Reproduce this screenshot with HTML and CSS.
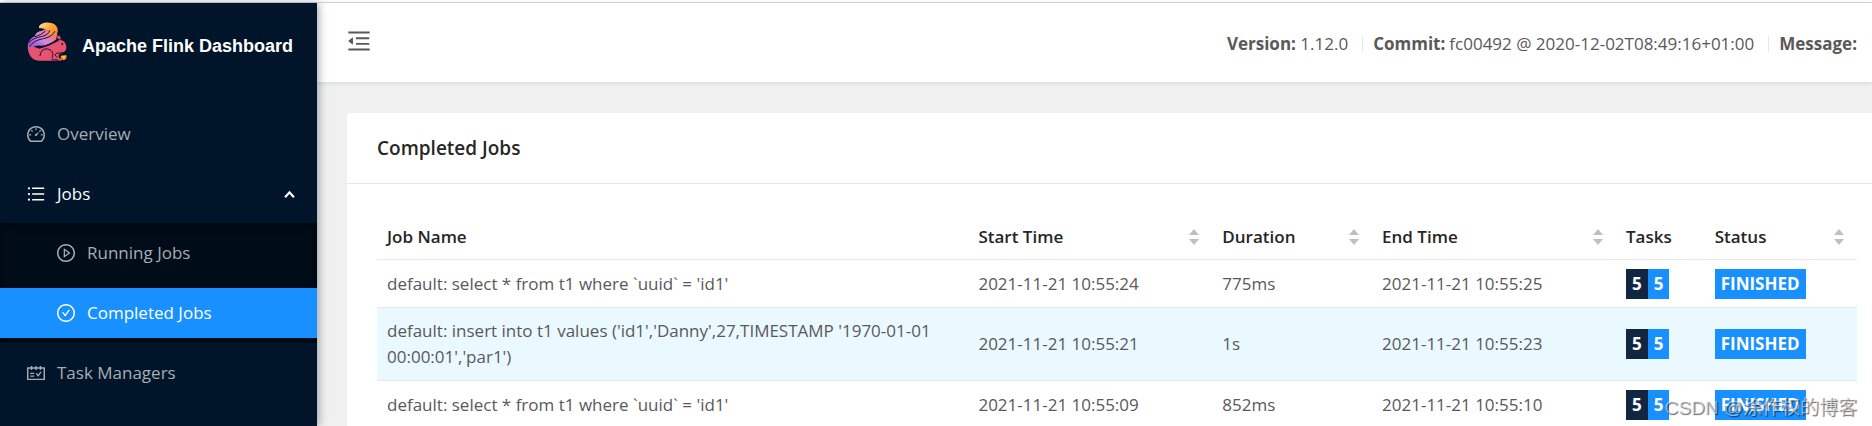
FILE: index.html
```html
<!DOCTYPE html>
<html lang="en">
<head>
  <meta charset="UTF-8" />
  <meta name="viewport" content="width=device-width, initial-scale=1.0"/>
  <title>Apache Flink Dashboard</title>
  <link rel="stylesheet" href="styles.css">
</head>
<body>
  <div class="layout">
    <aside class="sidebar">
      <div class="logo">
        <svg class="logo-img" viewBox="33 33 120 120" aria-hidden="true">
          <defs>
            <linearGradient id="tail" x1="0" y1="1" x2="1" y2="0">
              <stop offset="0" stop-color="#e6526f"/>
              <stop offset="0.25" stop-color="#a45be0"/>
              <stop offset="0.5" stop-color="#cf8be0"/>
              <stop offset="0.75" stop-color="#f0788a"/>
            </linearGradient>
            <linearGradient id="tip" x1="0" y1="0" x2="1" y2="1">
              <stop offset="0" stop-color="#fde3a0"/>
              <stop offset="0.5" stop-color="#f9a62c"/>
              <stop offset="1" stop-color="#f3705a"/>
            </linearGradient>
          </defs>
          <path fill="#e6526f" d="M36 108C35 135 48 151 68 152H133L140 149L129 143C126 137 130 131 137 130C145 127 152 120 151 110C150 99 145 93 135 90L131 84L127 93L96 108L70 116L48 108Z"/>
          <path fill="url(#tail)" d="M37 124C31 100 42 86 56 79C59 68 68 63 79 62L92 54L112 60C126 66 126 78 122 86C115 98 97 99 87 109C74 106 56 104 46 116C42 120 40 124 37 124Z"/>
          <path fill="url(#tip)" d="M69 49C76 39 87 36 99 38C117 39 128 50 125 66L119 78L108 86L110 76L99 78C105 68 99 60 88 57C80 56 75 53 69 54Z"/>
          <g fill="none" stroke="#1a1028" stroke-width="3" stroke-linecap="round">
            <path d="M41 110C52 91 70 89 90 84C104 80 112 73 116 65"/>
            <path d="M39 98C49 86 62 83 79 79C91 76 99 70 101 62"/>
            <path d="M57 80C68 77 79 72 87 64"/>
            <path d="M81 108C91 107 105 102 120 91"/>
            <path d="M72 137C74 120 86 114 98 118C112 122 113 136 108 144"/>
            <path d="M123 141C112 136 119 127 132 129L147 128M108 150C115 148 122 149 127 151"/>
          </g>
          <path fill="#e6526f" stroke="#1a1028" stroke-width="2" d="M121 85L125 75L134 79L135 90Z"/>
          <circle cx="139" cy="102" r="3" fill="#1a1028"/>
          <path fill="#f79a1c" d="M134 137L150 135C155 141 149 150 142 151L134 145Z"/>
          <path fill="#fde3a0" d="M140 139L147 138L143 143Z"/>
        </svg>
        <h1>Apache Flink Dashboard</h1>
      </div>

      <nav class="menu">
        <a class="menu-item" href="#overview">
          <svg class="icon" viewBox="64 64 896 896"><path d="M924.8 385.6a446.7 446.7 0 0 0-96-142.4 446.7 446.7 0 0 0-142.4-96C631.1 123.8 572.5 112 512 112s-119.1 11.8-174.4 35.2a446.7 446.7 0 0 0-142.4 96 446.7 446.7 0 0 0-96 142.4C75.8 440.9 64 499.5 64 560c0 132.7 58.3 257.7 159.9 343.1l1.7 1.4c5.8 4.8 13.1 7.5 20.6 7.5h531.7c7.5 0 14.8-2.7 20.6-7.5l1.7-1.4C901.7 817.7 960 692.7 960 560c0-60.5-11.9-119.1-35.2-174.4zM761.4 836H262.6A371.12 371.12 0 0 1 140 560c0-99.4 38.7-192.8 109-263 70.3-70.3 163.7-109 263-109 99.4 0 192.8 38.7 263 109 70.3 70.3 109 163.7 109 263 0 105.6-44.5 205.5-122.6 276zM623.5 421.5a8.03 8.03 0 0 0-11.3 0L527.7 506c-18.7-5-39.4-.2-54.1 14.5a55.95 55.95 0 0 0 0 79.2 55.95 55.95 0 0 0 79.2 0 55.87 55.87 0 0 0 14.5-54.1l84.5-84.5c3.1-3.1 3.1-8.2 0-11.3l-28.3-28.3zM490 320h44c4.4 0 8-3.6 8-8v-80c0-4.4-3.6-8-8-8h-44c-4.4 0-8 3.6-8 8v80c0 4.4 3.6 8 8 8zm260 218v44c0 4.4 3.6 8 8 8h80c4.4 0 8-3.6 8-8v-44c0-4.4-3.6-8-8-8h-80c-4.4 0-8 3.6-8 8zm12.7-197.2l-31.1-31.1a8.03 8.03 0 0 0-11.3 0l-56.6 56.6a8.03 8.03 0 0 0 0 11.3l31.1 31.1c3.1 3.1 8.2 3.1 11.3 0l56.6-56.6c3.1-3.1 3.1-8.2 0-11.3zm-458.6-31.1a8.03 8.03 0 0 0-11.3 0l-31.1 31.1a8.03 8.03 0 0 0 0 11.3l56.6 56.6c3.1 3.1 8.2 3.1 11.3 0l31.1-31.1c3.1-3.1 3.1-8.2 0-11.3l-56.6-56.6zM262 530h-80c-4.4 0-8 3.6-8 8v44c0 4.4 3.6 8 8 8h80c4.4 0 8-3.6 8-8v-44c0-4.4-3.6-8-8-8z"/></svg>
          <span>Overview</span>
        </a>
        <button class="menu-item open" type="button" aria-expanded="true">
          <svg class="icon" viewBox="64 64 896 896"><path d="M320 192h600v72H320zM320 476h600v72H320zM320 760h600v72H320zM104 228a56 56 0 1 0 112 0 56 56 0 1 0-112 0zM104 512a56 56 0 1 0 112 0 56 56 0 1 0-112 0zM104 796a56 56 0 1 0 112 0 56 56 0 1 0-112 0z"/></svg>
          <span>Jobs</span>
          <svg class="arrow" viewBox="0 0 10 8"><path d="M1 6.5L5 2L9 6.5"/></svg>
        </button>
        <div class="submenu">
          <a class="menu-item" href="#running">
            <svg class="icon" viewBox="64 64 896 896"><path d="M512 64C264.6 64 64 264.6 64 512s200.6 448 448 448 448-200.6 448-448S759.4 64 512 64zm0 820c-205.4 0-372-166.6-372-372s166.6-372 372-372 372 166.6 372 372-166.6 372-372 372z"/><path d="M719.4 499.1l-296.1-215A15.9 15.9 0 0 0 398 297v430c0 13.1 14.8 20.5 25.3 12.9l296.1-215a15.9 15.9 0 0 0 0-25.8zm-257.6 134V390.9L628.5 512 461.8 633.1z"/></svg>
            <span>Running Jobs</span>
          </a>
          <a class="menu-item active" href="#completed">
            <svg class="icon" viewBox="64 64 896 896"><path d="M699 353h-46.9c-10.2 0-19.9 4.9-25.9 13.3L469 584.3l-71.2-98.8c-6-8.3-15.6-13.3-25.9-13.3H325c-6.5 0-10.3 7.4-6.5 12.7l124.6 172.8a31.8 31.8 0 0 0 51.7 0l210.6-292c3.9-5.3.1-12.7-6.4-12.7z"/><path d="M512 64C264.6 64 64 264.6 64 512s200.6 448 448 448 448-200.6 448-448S759.4 64 512 64zm0 820c-205.4 0-372-166.6-372-372s166.6-372 372-372 372 166.6 372 372-166.6 372-372 372z"/></svg>
            <span>Completed Jobs</span>
          </a>
        </div>
        <a class="menu-item" href="#task-managers">
          <svg class="icon" viewBox="64 64 896 896"><path d="M928 224H768v-56c0-4.4-3.6-8-8-8h-56c-4.4 0-8 3.6-8 8v56H548v-56c0-4.4-3.6-8-8-8h-56c-4.4 0-8 3.6-8 8v56H328v-56c0-4.4-3.6-8-8-8h-56c-4.4 0-8 3.6-8 8v56H96c-17.7 0-32 14.3-32 32v576c0 17.7 14.3 32 32 32h832c17.7 0 32-14.3 32-32V256c0-17.7-14.3-32-32-32zm-40 568H136V296h120v56c0 4.4 3.6 8 8 8h56c4.4 0 8-3.6 8-8v-56h148v56c0 4.4 3.6 8 8 8h56c4.4 0 8-3.6 8-8v-56h148v56c0 4.4 3.6 8 8 8h56c4.4 0 8-3.6 8-8v-56h120v496zM416 496H232c-4.4 0-8 3.6-8 8v48c0 4.4 3.6 8 8 8h184c4.4 0 8-3.6 8-8v-48c0-4.4-3.6-8-8-8zm0 136H232c-4.4 0-8 3.6-8 8v48c0 4.4 3.6 8 8 8h184c4.4 0 8-3.6 8-8v-48c0-4.4-3.6-8-8-8zm308.2-177.4L620.6 598.3l-52.8-73.1c-3-4.2-7.8-6.6-12.9-6.6H500c-6.5 0-10.3 7.4-6.5 12.7l114.1 158.2a15.9 15.9 0 0 0 25.8 0l165-228.7c3.8-5.3 0-12.7-6.5-12.7H737c-5-.1-9.8 2.4-12.8 6.5z"/></svg>
          <span>Task Managers</span>
        </a>
      </nav>
    </aside>

    <div class="main">
      <header class="header">
        <button class="fold-btn" type="button" aria-label="Collapse menu">
          <svg viewBox="64 64 896 896"><path d="M400 370h496v72H400zM400 582h496v72H400zM112 160h800v72H112zM112 792h800v72H112zM115.4 518.9L271.7 642c5.8 4.6 14.4.5 14.4-6.9V388.9c0-7.4-8.5-11.5-14.4-6.9L115.4 505.1a8.74 8.74 0 0 0 0 13.8z"/></svg>
        </button>
        <div class="build-info">
          <span><strong>Version:</strong> 1.12.0</span>
          <span><strong>Commit:</strong> fc00492 @ 2020-12-02T08:49:16+01:00</span>
          <span><strong>Message:</strong></span>
        </div>
      </header>

      <main class="card">
        <h2>Completed Jobs</h2>
        <div class="card-body">
          <table>
            <colgroup>
              <col class="col-name"><col class="col-time"><col class="col-duration"><col class="col-time"><col class="col-tasks"><col class="col-status">
            </colgroup>
            <thead>
              <tr>
                <th>Job Name</th>
                <th><button class="sort" type="button">Start Time<svg viewBox="0 0 10 16"><path d="M5 0L10 6H0zM0 10H10L5 16z"/></svg></button></th>
                <th><button class="sort" type="button">Duration<svg viewBox="0 0 10 16"><path d="M5 0L10 6H0zM0 10H10L5 16z"/></svg></button></th>
                <th><button class="sort" type="button">End Time<svg viewBox="0 0 10 16"><path d="M5 0L10 6H0zM0 10H10L5 16z"/></svg></button></th>
                <th>Tasks</th>
                <th><button class="sort" type="button">Status<svg viewBox="0 0 10 16"><path d="M5 0L10 6H0zM0 10H10L5 16z"/></svg></button></th>
              </tr>
            </thead>
            <tbody>
              <tr>
                <td>default: select * from t1 where `uuid` = 'id1'</td>
                <td>2021-11-21 10:55:24</td>
                <td>775ms</td>
                <td>2021-11-21 10:55:25</td>
                <td><div class="tags"><span class="tag total">5</span><span class="tag">5</span></div></td>
                <td><div class="tags"><span class="tag">FINISHED</span></div></td>
              </tr>
              <tr class="hover">
                <td>default: insert into t1 values ('id1','Danny',27,TIMESTAMP '1970-01-01 00:00:01','par1')</td>
                <td>2021-11-21 10:55:21</td>
                <td>1s</td>
                <td>2021-11-21 10:55:23</td>
                <td><div class="tags"><span class="tag total">5</span><span class="tag">5</span></div></td>
                <td><div class="tags"><span class="tag">FINISHED</span></div></td>
              </tr>
              <tr>
                <td>default: select * from t1 where `uuid` = 'id1'</td>
                <td>2021-11-21 10:55:09</td>
                <td>852ms</td>
                <td>2021-11-21 10:55:10</td>
                <td><div class="tags"><span class="tag total">5</span><span class="tag">5</span></div></td>
                <td><div class="tags"><span class="tag">FINISHED</span></div></td>
              </tr>
            </tbody>
          </table>
        </div>
      </main>
    </div>
  </div>
  <div class="watermark">CSDN @涂作权的博客</div>
</body>
</html>
```
FILE: styles.css
```css
:root {
  --primary: #1890ff;
  --dark: #001529;
  --darker: #000c17;
  --total: #112641;
  --bg: #f0f0f0;
  --border: #e8e8e8;
  --text: #595959;
  --heading: #262626;
}

* {
  box-sizing: border-box;
}

body {
  margin: 0;
  height: 100vh;
  overflow: hidden;
  position: relative;
  padding-top: 2px;
  background: #fff;
  font-family: "Open Sans", "Noto Sans", sans-serif;
  font-size: 17px;
  line-height: 26px;
  color: var(--text);
}

button {
  padding: 0;
  border: none;
  background: none;
  font: inherit;
  color: inherit;
  cursor: pointer;
}

.layout {
  display: flex;
  height: 100%;
  border-top: 1px solid #d9d9dc;
}

/* sidebar */
.sidebar {
  flex: 0 0 317px;
  position: relative;
  z-index: 1;
  background: var(--dark);
  box-shadow: 2px 0 8px rgba(0, 21, 41, 0.35);
}

.logo {
  display: flex;
  align-items: center;
  gap: 15px;
  height: 76px;
  padding-left: 27px;
}

.logo-img {
  width: 40px;
  height: 40px;
}

.logo h1 {
  margin: 10px 0 0;
  font: bold 18px/26px "Liberation Sans", Arial, sans-serif;
  color: #fff;
}

.menu {
  padding-top: 25px;
}

.menu-item {
  display: flex;
  align-items: center;
  gap: 12px;
  width: 100%;
  height: 50px;
  margin: 5px 0 10px;
  padding: 0 22px 0 27px;
  color: #a6adb4;
  text-align: left;
  text-decoration: none;
}

.icon {
  width: 18px;
  height: 18px;
  fill: currentColor;
}

.menu-item.open {
  margin-bottom: 4px;
  color: #fff;
}

.arrow {
  width: 11px;
  height: 9px;
  margin-left: auto;
  fill: none;
  stroke: currentColor;
  stroke-width: 2;
}

.submenu {
  padding: 5px 0;
  background: var(--darker);
  box-shadow: inset 0 2px 8px rgba(0, 0, 0, 0.45);
}

.submenu .menu-item {
  margin: 0;
  padding-left: 57px;
}

.submenu .menu-item + .menu-item {
  margin-top: 10px;
}

.menu-item.active {
  background: var(--primary);
  color: #fff;
}

/* header */
.main {
  flex: 1;
  min-width: 0;
  background: var(--bg);
}

.header {
  display: flex;
  align-items: center;
  justify-content: space-between;
  height: 79px;
  padding: 0 15px 0 30px;
  background: #fff;
  box-shadow: 0 1px 5px rgba(0, 21, 41, 0.12);
}

.fold-btn {
  padding-bottom: 3px;
}

.fold-btn svg {
  display: block;
  width: 24px;
  height: 24px;
  fill: var(--text);
}

.build-info {
  display: flex;
  align-items: center;
  padding-top: 2px;
}

.build-info span + span {
  display: flex;
  align-items: center;
  gap: 4px;
}

.build-info span + span::before {
  content: "";
  width: 1px;
  height: 16px;
  margin: 0 6px 0 14px;
  background: var(--border);
}

/* jobs card */
.card {
  margin: 31px 0 0 30px;
  background: #fff;
  border-radius: 3px 0 0 0;
}

.card h2 {
  margin: 0;
  padding: 22px 30px;
  border-bottom: 1px solid var(--border);
  font-size: 19px;
  font-weight: 600;
  line-height: 26px;
  color: var(--heading);
}

.card-body {
  padding: 30px 15px 30px 30px;
}

table {
  width: 100%;
  table-layout: fixed;
  border-collapse: separate;
  border-spacing: 0;
}

.col-name {
  width: 40%;
}

.col-time {
  width: 16.5%;
}

.col-duration {
  width: 10.8%;
}

.col-tasks {
  width: 6%;
}

.col-status {
  width: 10.3%;
}

th,
td {
  padding: 10px;
  border-bottom: 1px solid var(--border);
  text-align: left;
}

th {
  padding-bottom: 9px;
  font-weight: 600;
  color: var(--heading);
}

td {
  height: 48px;
}

.sort {
  display: flex;
  align-items: center;
  justify-content: space-between;
  width: 100%;
  padding-right: 3px;
}

.sort svg {
  width: 10px;
  height: 16px;
  fill: #bfbfbf;
}

.hover td {
  background: #eaf8ff;
}

.tags {
  display: flex;
  margin: -2px 0;
}

.tag {
  padding: 2px 6px;
  background: var(--primary);
  color: #fff;
  font-weight: 700;
}

.tag.total {
  background: var(--total);
}

.watermark {
  position: absolute;
  right: 15px;
  bottom: 4px;
  font: 19px/28px "Liberation Sans", "Noto Sans CJK SC", sans-serif;
  color: rgba(255, 255, 255, 0.5);
  text-shadow: 1px 1px 1px rgba(0, 0, 0, 0.6);
}
```
